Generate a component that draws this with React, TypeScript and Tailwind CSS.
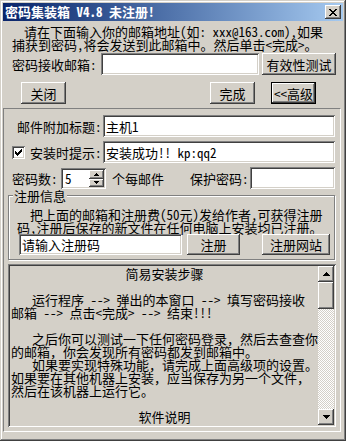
import React from "react";

const raised =
  "shadow-[inset_-1px_-1px_#404040,inset_1px_1px_#ffffff,inset_-2px_-2px_#808080,inset_2px_2px_#d4d0c8]";
const sunken =
  "shadow-[inset_1px_1px_#808080,inset_-1px_-1px_#ffffff,inset_2px_2px_#404040,inset_-2px_-2px_#d4d0c8]";
const raisedThin = "shadow-[inset_-1px_-1px_#404040,inset_1px_1px_#ffffff,inset_-2px_-2px_#808080]";

function Btn({ className, children }: { className: string; children: React.ReactNode }) {
  return (
    <div className={`flex items-center justify-center bg-[#d4d0c8] ${raised} ${className}`}>{children}</div>
  );
}

function Rows({ rows }: { rows: string[] }) {
  const rects: React.ReactNode[] = [];
  rows.forEach((r, y) => {
    for (let x = 0; x < r.length; x++) {
      if (r[x] === "X") rects.push(<rect key={`${x}-${y}`} x={x} y={y} width={1} height={1} />);
    }
  });
  return (
    <svg width={rows[0].length} height={rows.length} shapeRendering="crispEdges" fill="#000">
      {rects}
    </svg>
  );
}

const UP = ["...X...", "..XXX..", ".XXXXX.", "XXXXXXX"];
const DOWN = ["XXXXXXX", ".XXXXX.", "..XXX..", "...X..."];
const SUP = ["..X..", ".XXX.", "XXXXX"];
const SDOWN = ["XXXXX", ".XXX.", "..X.."];
const CHECK = ["......X", ".....XX", "X...XXX", "XX.XXX.", "XXXXX..", ".XXX...", "..X...."];
const CLOSE = ["XX....XX", ".XX..XX.", "..XXXX..", "...XX...", "..XXXX..", ".XX..XX.", "XX....XX"];

export default function App() {
  return (
    <div className="w-[346px] h-[441px] bg-[#d4d0c8] p-[3px] flex flex-col font-['Noto_Sans_Mono_CJK_SC','Noto_Sans_CJK_SC',sans-serif] text-[13px] leading-[13px] text-black shadow-[inset_-1px_-1px_#404040,inset_1px_1px_#d4d0c8,inset_-2px_-2px_#808080,inset_2px_2px_#ffffff]">
      {/* title bar */}
      <div className="h-[18px] w-[340px] shrink-0 flex items-center justify-between bg-linear-to-r from-[#0a246a] to-[#a6caf0] pl-[2px] pr-[2px]">
        <span className="text-white font-bold text-[13px] leading-[14px] whitespace-nowrap">密码集装箱 V4.8 未注册!</span>
        <div className={`w-[16px] h-[14px] bg-[#d4d0c8] ${raised} flex items-center justify-center`}>
          <Rows rows={CLOSE} />
        </div>
      </div>

      {/* intro */}
      <div className="mt-[4px] pl-[9px] whitespace-nowrap leading-[13px]">
        <div className="pl-[12px]">请在下面输入你的邮箱地址(如: xxx@163.com),如果</div>
        <div>捕获到密码,将会发送到此邮箱中。然后单击&lt;完成&gt;。</div>
      </div>

      {/* email row */}
      <div className="mt-[2px] flex items-center h-[22px]">
        <div className="ml-[9px] w-[89px] whitespace-nowrap">密码接收邮箱:</div>
        <div className={`w-[158px] h-[22px] bg-white ${sunken}`} />
        <Btn className="ml-[3px] w-[74px] h-[22px]">有效性测试</Btn>
      </div>

      {/* buttons row */}
      <div className="mt-[7px] flex h-[22px]">
        <Btn className="ml-[18px] w-[45px] h-[22px]">关闭</Btn>
        <Btn className="ml-[144px] w-[45px] h-[22px]">完成</Btn>
        <div className="ml-[16px] w-[45px] h-[22px] border border-black flex">
          <Btn className="w-full h-full">&lt;&lt;高级</Btn>
        </div>
      </div>

      {/* advanced panel */}
      <div className="mt-[4px] w-[338px] h-[324px] border border-t-[#808080] border-l-[#808080] border-r-white border-b-white flex flex-col">
        <div className="mt-[6px] flex items-center h-[22px]">
          <div className="ml-[13px] w-[86px] whitespace-nowrap">邮件附加标题:</div>
          <div className={`w-[232px] h-[22px] bg-white ${sunken} flex items-center pl-[3px]`}>主机1</div>
        </div>
        <div className="mt-[4px] flex items-center h-[22px]">
          <div className={`ml-[8px] w-[13px] h-[13px] bg-white ${sunken} flex items-center justify-center`}>
            <Rows rows={CHECK} />
          </div>
          <div className="ml-[5px] w-[73px] whitespace-nowrap">安装时提示:</div>
          <div className={`w-[232px] h-[22px] bg-white ${sunken} flex items-center pl-[3px] whitespace-nowrap`}>
            安装成功!! kp:qq2
          </div>
        </div>
        <div className="mt-[4px] flex items-center h-[22px]">
          <div className="ml-[8px] w-[49px] whitespace-nowrap">密码数:</div>
          <div className={`w-[45px] h-[21px] bg-white ${sunken} flex items-center pl-[4px] pr-[2px] py-[2px]`}>
            <span className="flex-1">5</span>
            <div className="flex flex-col w-[15px] h-[17px]">
              <div className={`h-[9px] bg-[#d4d0c8] ${raisedThin} flex items-center justify-center`}>
                <Rows rows={SUP} />
              </div>
              <div className={`h-[8px] bg-[#d4d0c8] ${raisedThin} flex items-center justify-center`}>
                <Rows rows={SDOWN} />
              </div>
            </div>
          </div>
          <div className="ml-[6px] w-[78px] whitespace-nowrap">个每邮件</div>
          <div className="w-[60px] whitespace-nowrap">保护密码:</div>
          <div className={`w-[85px] h-[22px] bg-white ${sunken}`} />
        </div>

        {/* group box */}
        <div className="mt-[6px] ml-[4px] w-[327px] h-[65px] shrink-0 relative border border-[#808080] shadow-[inset_1px_1px_#ffffff,1px_1px_#ffffff] flex flex-col pt-[12px] pl-[8px]">
          <div className="absolute left-[4px] top-[-7px] px-[1px] bg-[#d4d0c8] leading-[13px] whitespace-nowrap">注册信息</div>
          <div className="whitespace-nowrap leading-[13px]">
            <div className="pl-[13px]">把上面的邮箱和注册费(50元)发给作者,可获得注册</div>
            <div>码,注册后保存的新文件在任何电脑上安装均已注册。</div>
          </div>
          <div className="flex h-[21px]">
            <div className={`ml-[2px] w-[163px] h-[21px] bg-white ${sunken} flex items-center pl-[3px]`}>请输入注册码</div>
            <Btn className="ml-[5px] w-[53px] h-[21px]">注册</Btn>
            <Btn className="ml-[22px] w-[68px] h-[21px]">注册网站</Btn>
          </div>
        </div>

        {/* memo */}
        <div className={`mt-[4px] ml-[4px] w-[328px] h-[163px] shrink-0 bg-[#d4d0c8] ${sunken} p-[2px] flex`}>
          <div className="flex-1 pl-[1px] pt-[1px] leading-[13px] whitespace-nowrap">
            <div className="text-center">简易安装步骤</div>
            <div>&nbsp;</div>
            <div className="pl-[21px]">运行程序 --&gt; 弹出的本窗口 --&gt; 填写密码接收</div>
            <div>邮箱 --&gt; 点击&lt;完成&gt; --&gt; 结束!!!</div>
            <div>&nbsp;</div>
            <div className="pl-[21px]">之后你可以测试一下任何密码登录，然后去查查你</div>
            <div>的邮箱，你会发现所有密码都发到邮箱中。</div>
            <div className="pl-[21px]">如果要实现特殊功能，请完成上面高级项的设置。</div>
            <div>如果要在其他机器上安装，应当保存为另一个文件，</div>
            <div>然后在该机器上运行它。</div>
            <div>&nbsp;</div>
            <div className="text-center">软件说明</div>
          </div>
          <div className="w-[16px] flex flex-col">
            <div className={`h-[16px] bg-[#d4d0c8] ${raised} flex items-center justify-center`}>
              <Rows rows={UP} />
            </div>
            <div className={`h-[27px] bg-[#d4d0c8] ${raised}`} />
            <div className="flex-1 [background-image:repeating-conic-gradient(#d4d0c8_0_25%,#ffffff_0_50%)] [background-size:2px_2px]" />
            <div className={`h-[16px] bg-[#d4d0c8] ${raised} flex items-center justify-center`}>
              <Rows rows={DOWN} />
            </div>
          </div>
        </div>
      </div>
    </div>
  );
}
